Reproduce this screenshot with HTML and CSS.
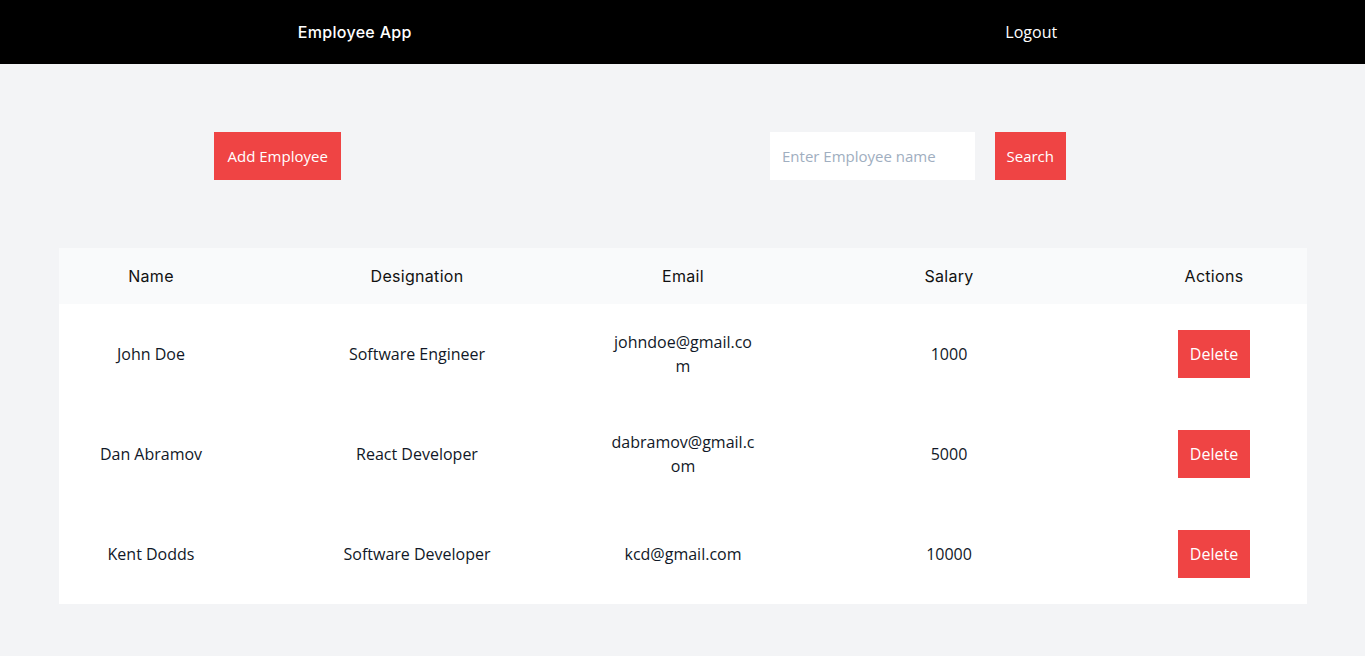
FILE: index.html
```html
<!DOCTYPE html>
<html lang="en">
<head>
<meta charset="utf-8">
<title>Employee App</title>
<link rel="stylesheet" href="styles.css">
</head>
<body>
<nav class="nav">
  <div class="nav-col nav-left"><span class="brand">Employee App</span></div>
  <div class="nav-col nav-right"><span class="logout">Logout</span></div>
</nav>
<main class="main">
  <section class="toolbar">
    <div class="tool-left"><button class="btn btn-add">Add Employee</button></div>
    <div class="tool-right">
      <input class="search-input" type="text" placeholder="Enter Employee name">
      <button class="btn btn-search">Search</button>
    </div>
  </section>
  <section class="table">
    <div class="row head">
      <div class="cell">Name</div>
      <div class="cell">Designation</div>
      <div class="cell">Email</div>
      <div class="cell">Salary</div>
      <div class="cell">Actions</div>
    </div>
    <div class="row body-row">
      <div class="cell">John Doe</div>
      <div class="cell">Software Engineer</div>
      <div class="cell email">johndoe@gmail.com</div>
      <div class="cell">1000</div>
      <div class="cell"><button class="btn btn-delete">Delete</button></div>
    </div>
    <div class="row body-row">
      <div class="cell">Dan Abramov</div>
      <div class="cell">React Developer</div>
      <div class="cell email">dabramov@gmail.com</div>
      <div class="cell">5000</div>
      <div class="cell"><button class="btn btn-delete">Delete</button></div>
    </div>
    <div class="row body-row">
      <div class="cell">Kent Dodds</div>
      <div class="cell">Software Developer</div>
      <div class="cell email">kcd@gmail.com</div>
      <div class="cell">10000</div>
      <div class="cell"><button class="btn btn-delete">Delete</button></div>
    </div>
  </section>
</main>
</body>
</html>
```
FILE: styles.css
```css
* { box-sizing: border-box; }
html, body { margin: 0; padding: 0; }
body {
  background: #f3f4f6;
  font-family: "Open Sans", "Liberation Sans", sans-serif;
  color: #111827;
}
.nav {
  height: 64px;
  background: #000;
  color: #fff;
  display: grid;
  grid-template-columns: 1fr 1fr;
  align-items: center;
}
.nav-col { text-align: center; }
.nav-left { padding-left: 27px; }
.nav-right { padding-left: 15px; }
.brand {
  font-family: Inter, "Noto Sans", sans-serif;
  font-weight: 500;
  font-size: 16px;
  letter-spacing: 0.3px;
}
.logout { font-size: 16px; }
.main { padding: 68px 58px 0 59px; }
.toolbar {
  display: grid;
  grid-template-columns: 1fr 1fr;
  height: 48px;
  margin-bottom: 68px;
}
.tool-left { padding-left: 155px; }
.tool-right { display: flex; gap: 20px; padding-left: 87px; }
.btn {
  border: none;
  background: #ef4444;
  color: #fff;
  font-family: "Open Sans", "Liberation Sans", sans-serif;
  height: 48px;
  padding: 0 12px;
  cursor: pointer;
}
.btn-add { font-size: 15px; padding: 0 13.5px; }
.btn-search { font-size: 15px; padding: 0 11.5px; }
.btn-delete { font-size: 16px; }
.search-input {
  width: 205px;
  height: 48px;
  border: none;
  background: #fff;
  padding: 0 12px;
  font-family: "Open Sans", "Liberation Sans", sans-serif;
  font-size: 15px;
  color: #111827;
  outline: none;
}
.search-input::placeholder { color: #a0aec0; }
.table { width: 1248px; background: #fff; }
.row {
  display: grid;
  grid-template-columns: repeat(5, 184px);
  column-gap: 82px;
  align-items: center;
}
.head {
  height: 56px;
  background: #f9fafb;
  font-family: Inter, "Noto Sans", sans-serif;
  font-size: 16px;
  letter-spacing: 0.3px;
  color: #111;
}
.body-row { height: 100px; font-size: 16px; line-height: 24px; }
.cell { text-align: center; padding: 0 17px; }
.cell:last-child { padding-right: 18px; padding-left: 16px; }
.email { word-break: break-all; }
```
